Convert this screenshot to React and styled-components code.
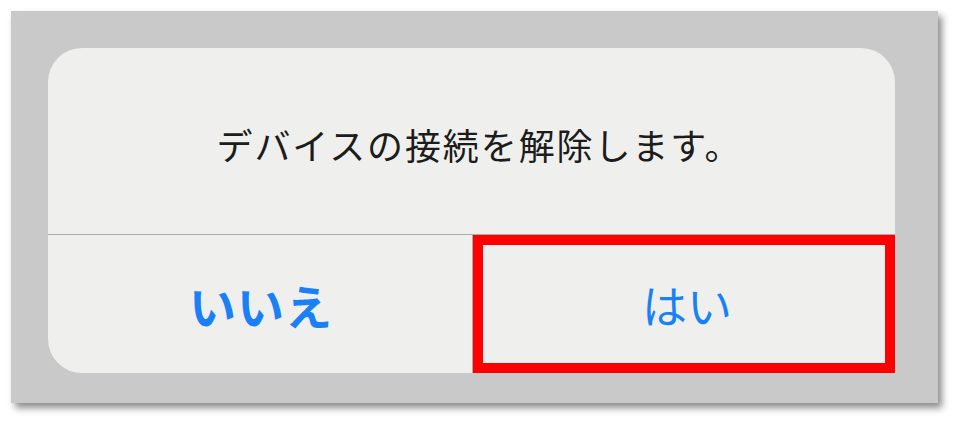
import styled, {createGlobalStyle} from 'styled-components'

const GlobalStyle = createGlobalStyle`
  * {
    box-sizing: border-box;
  }
  body {
    margin: 0;
    background-color: #ffffff;
    font-family: 'Noto Sans CJK JP', 'Noto Sans', sans-serif;
  }
`

const Page = styled.div`
  width: 957px;
  height: 423px;
  padding: 11px 19px 20px 11px;
`

const Backdrop = styled.div`
  width: 927px;
  height: 392px;
  background-color: #c9c9c9;
  box-shadow: 4px 5px 7px rgba(0, 0, 0, 0.45);
  padding: 37px 43px 30px 37px;
`

const Dialog = styled.div`
  width: 847px;
  height: 325px;
  background-color: #eff0ee;
  border-radius: 34px;
  display: flex;
  flex-direction: column;
`

const Message = styled.p`
  margin: 0;
  height: 186px;
  display: flex;
  align-items: center;
  justify-content: center;
  padding-top: 6px;
  padding-left: 16px;
  font-size: 36px;
  color: #1c1c1c;
  letter-spacing: 1.9px;
`

const ButtonRow = styled.div`
  flex: 1;
  display: flex;
  border-top: 1px solid #aaacaa;
`

const DialogButton = styled.button`
  border: 0;
  background: transparent;
  font-family: inherit;
  font-size: ${props => (props.bold ? '47px' : '45px')};
  font-weight: ${props => (props.bold ? 700 : 400)};
  letter-spacing: ${props => (props.bold ? '1px' : '0')};
  color: #1a80f5;
  cursor: pointer;
  padding: 0;
  display: flex;
  align-items: center;
  justify-content: center;
  width: ${props => (props.bold ? '425px' : 'auto')};
  flex: ${props => (props.bold ? '0 0 auto' : '1')};
  border-right: ${props => (props.bold ? '1px solid #aaacaa' : '0')};
  outline: ${props => (props.highlighted ? '10px solid #ff0000' : 'none')};
  outline-offset: -10px;
  padding-left: ${props => (props.bold ? '2px' : '6px')};
`

export default function App() {
  return (
    <Page>
      <GlobalStyle />
      <Backdrop>
        <Dialog>
          <Message>デバイスの接続を解除します。</Message>
          <ButtonRow>
            <DialogButton type="button" bold>
              いいえ
            </DialogButton>
            <DialogButton type="button" highlighted>
              はい
            </DialogButton>
          </ButtonRow>
        </Dialog>
      </Backdrop>
    </Page>
  )
}
